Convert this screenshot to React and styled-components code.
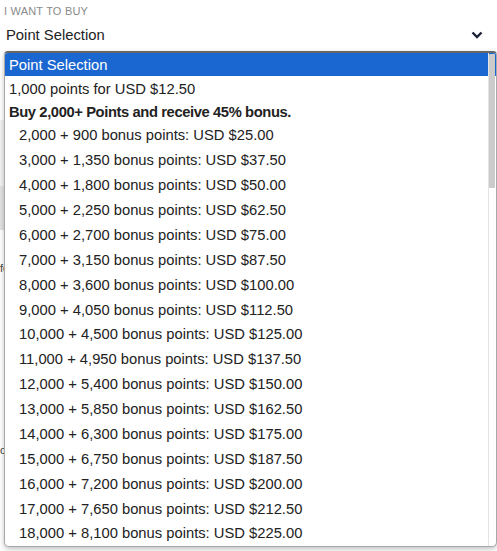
import React from "react";
import styled, { createGlobalStyle } from "styled-components";

const GlobalStyle = createGlobalStyle`
html, body {
  margin:0;
  padding:0;
  background:#fff;
}
body {
  font-family:"Liberation Sans", Arial, sans-serif;
  color:#222;
}
`;

const Page = styled.div`
position:relative;
width:497px;
height:551px;
overflow:hidden;
background:#fff;
`;

const Field = styled.div`
padding:4px 0 0 0;
`;

const Label = styled.div`
font-size:11px;
letter-spacing:0.2px;
color:#8a8a8a;
text-transform:uppercase;
padding-left:4px;
line-height:14px;
`;

const SelectRow = styled.div`
display:flex;
align-items:center;
justify-content:space-between;
height:34px;
padding:0 14px 0 6px;
font-size:14.8px;
color:#222;
box-shadow:0 6px 6px -4px rgba(0,0,0,0.06);
`;

const Behind = styled.div`
padding:210px 0 0 0;
font-size:11px;
color:#444;
display:flex;
flex-direction:column;
gap:170px;
`;

const BehindStrip = styled.div`
position:absolute;
left:0;
top:120px;
width:4px;
height:110px;
background:linear-gradient(#f2f2f2 0 60%, #e2e2e2 60%);
`;

const Dropdown = styled.div`
position:absolute;
top:51px;
left:4px;
right:0;
bottom:4px;
background:#fff;
border:1px solid #a9a9a9;
border-top:2px solid #666;
border-radius:4px 4px 5px 5px;
box-shadow:0 2px 5px rgba(0,0,0,0.25);
overflow:hidden;
`;

const Scroll = styled.div`
position:absolute;
top:0;
right:0;
width:7px;
bottom:0;
border-left:1px solid #e4e4e4;
`;

const Thumb = styled.div`
margin:1px 1px 0 0;
height:134px;
background:#cbcbcb;
border-radius:1px;
`;

const Option = styled.div`
height:${p => p.$h || 24.875}px;
display:flex;
align-items:center;
padding-left:${p => (p.$indent ? 14 : 4)}px;
font-size:14.75px;
font-weight:${p => (p.$bold ? 700 : 400)};
letter-spacing:${p => (p.$bold ? "-0.4px" : "0")};
color:${p => (p.$active ? "#fff" : "#222")};
background:${p => (p.$active ? "#1b67d1" : "transparent")};
white-space:nowrap;
`;

const Chevron = () => (
  <svg width="12" height="8" viewBox="0 0 12 8">
    <path d="M1.5 1.5 L6 6 L10.5 1.5" fill="none" stroke="#1c2236" strokeWidth="2.4" />
  </svg>
);

const fmt = n => n.toLocaleString("en-US");

const tiers = Array.from({ length: 17 }, (_, i) => {
  const pts = (i + 2) * 1000;
  return {
    pts,
    bonus: pts * 0.45,
    price: ((pts / 1000) * 12.5).toFixed(2),
  };
});

export default function App() {
  return (
    <Page>
      <GlobalStyle />
      <Field>
        <Label>I want to buy</Label>
        <SelectRow>
          <span>Point Selection</span>
          <Chevron />
        </SelectRow>
      </Field>
      <BehindStrip />
      <Behind>
        <span>fe</span>
        <span>c</span>
      </Behind>
      <Dropdown>
        <Option $active $h={23}>Point Selection</Option>
        <Option $h={25}>1,000 points for USD $12.50</Option>
        <Option $bold $h={22}>Buy 2,000+ Points and receive 45% bonus.</Option>
        {tiers.map(t => (
          <Option key={t.pts} $indent>
            {fmt(t.pts)} + {fmt(t.bonus)} bonus points: USD ${t.price}
          </Option>
        ))}
        <Scroll>
          <Thumb />
        </Scroll>
      </Dropdown>
    </Page>
  );
}
